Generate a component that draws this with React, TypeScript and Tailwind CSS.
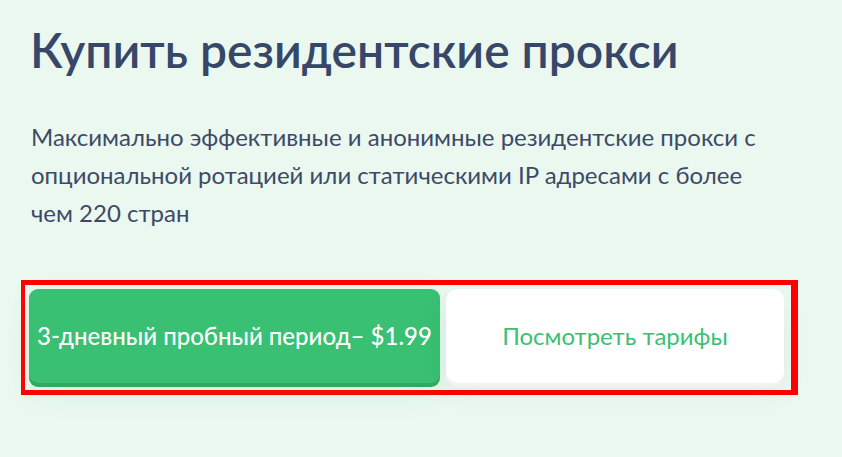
export default function App() {
  return (
    <div
      className="min-h-[457px] w-full bg-[#ebf8f0] pt-[21px] text-[#374768]"
      style={{ fontFamily: "Lato, 'Noto Sans', sans-serif" }}
    >
      <h1 className="pl-[30px] text-[48px] font-semibold leading-[1.2] text-[#374768]">
        Купить резидентские прокси
      </h1>
      <p className="mt-[39px] max-w-[771px] pl-[31px] text-[24px] leading-[38px] text-[#3d4a66]">
        Максимально эффективные и анонимные резидентские прокси с опциональной ротацией или
        статическими IP адресами с более чем 220 стран
      </p>
      <div className="mt-[48px] ml-[21px] flex w-[777px] gap-[6px] border-y-[5px] border-r-[7px] border-l-4 border-[#ff0000] pt-1 pb-[7px] pl-1 pr-[6px]">
        <button className="flex h-[94px] w-[411px] items-center justify-center rounded-[9px] bg-[#39c072] text-[24px] font-medium text-white shadow-[0_4px_0_#33a862,0_10px_28px_rgba(57,192,114,0.12)]">
          3-дневный пробный период– $1.99
        </button>
        <button className="flex h-[94px] w-[338px] items-center justify-center rounded-[12px] bg-white text-[24px] text-[#3cbf72] shadow-[0_4px_0_#f1f2f2,0_10px_28px_rgba(30,80,50,0.06)]">
          Посмотреть тарифы
        </button>
      </div>
    </div>
  );
}
